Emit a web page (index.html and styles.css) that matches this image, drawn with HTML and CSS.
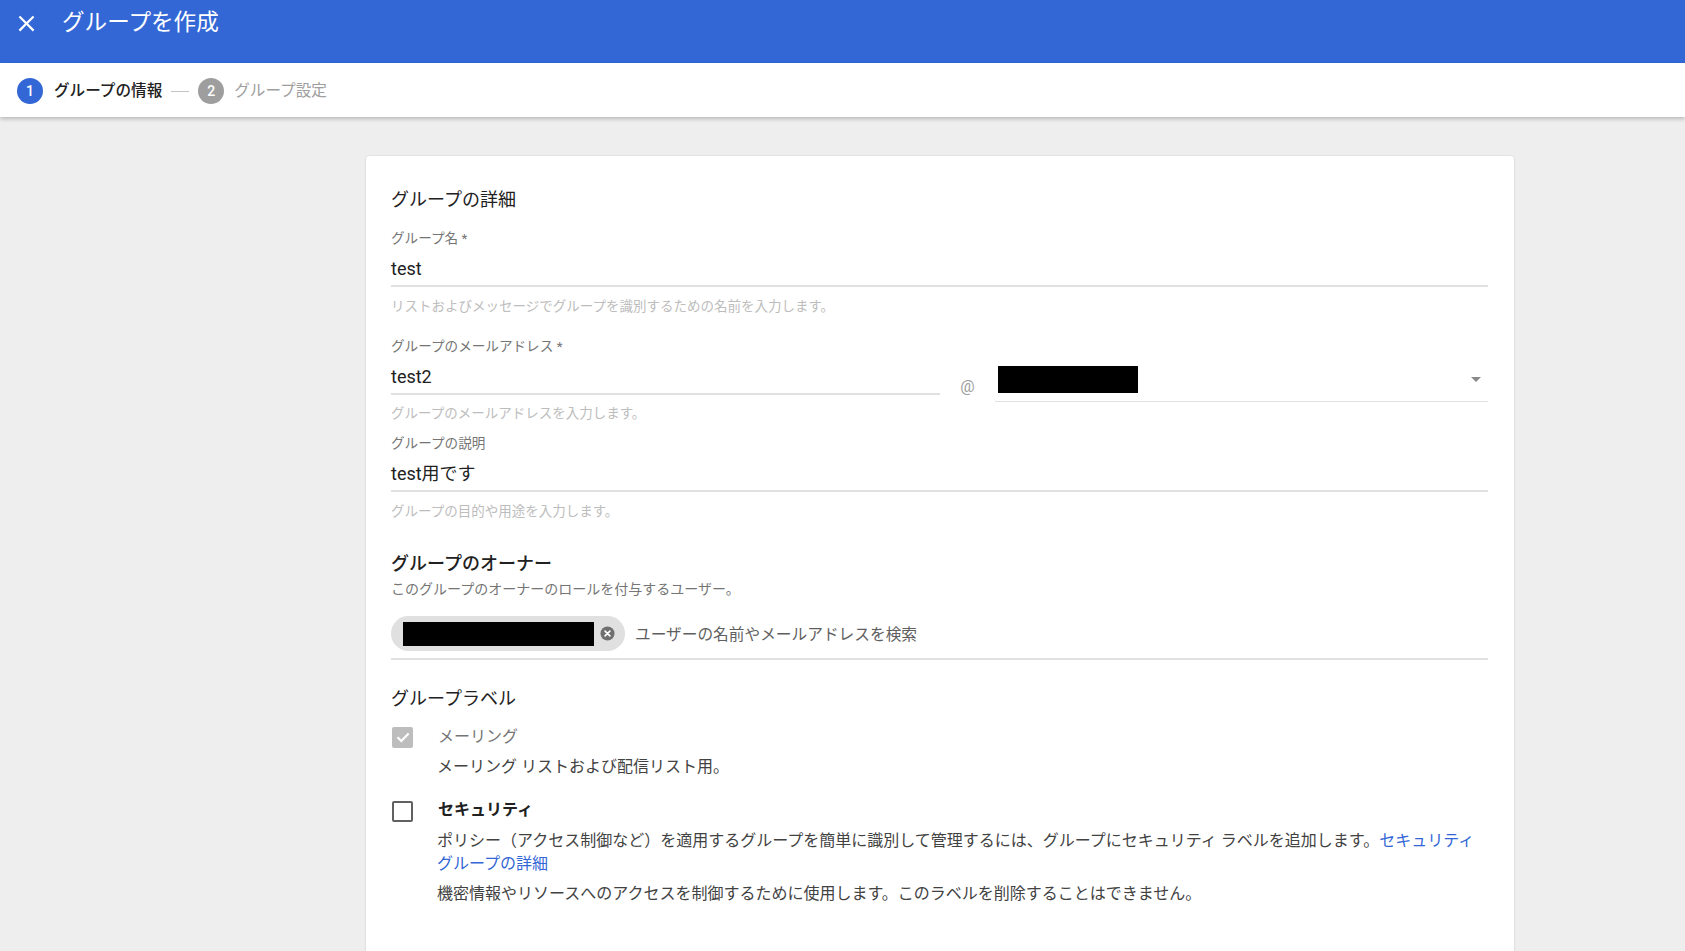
FILE: index.html
```html
<!DOCTYPE html>
<html lang="ja">
<head>
<meta charset="utf-8">
<title>グループを作成</title>
<link rel="stylesheet" href="styles.css">
</head>
<body>
<header class="appbar">
  <div class="appbar-row">
    <svg class="close-icon" viewBox="0 0 24 24" width="27" height="27" aria-hidden="true"><path d="M19 6.41L17.59 5 12 10.59 6.41 5 5 6.41 10.59 12 5 17.59 6.41 19 12 13.41 17.59 19 19 17.59 13.41 12z" fill="#ffffff"/></svg>
    <h1 class="appbar-title">グループを作成</h1>
  </div>
</header>
<nav class="stepper">
  <div class="step step-active"><span class="step-num">1</span><span class="step-label">グループの情報</span></div>
  <span class="step-line"></span>
  <div class="step step-inactive"><span class="step-num">2</span><span class="step-label">グループ設定</span></div>
</nav>
<main class="page">
  <section class="card">
    <h2 class="section-title">グループの詳細</h2>

    <div class="field field-first">
      <div class="field-label">グループ名 *</div>
      <div class="field-input">test</div>
      <div class="field-help">リストおよびメッセージでグループを識別するための名前を入力します。</div>
    </div>

    <div class="field field-email">
      <div class="field-label">グループのメールアドレス *</div>
      <div class="email-row">
        <div class="field-input email-input">test2</div>
        <div class="at-sign">@</div>
        <div class="domain-select">
          <span class="redacted domain-redacted"></span>
          <span class="select-arrow"></span>
        </div>
      </div>
      <div class="field-help help-tight">グループのメールアドレスを入力します。</div>
    </div>

    <div class="field field-desc">
      <div class="field-label">グループの説明</div>
      <div class="field-input">test用です</div>
      <div class="field-help">グループの目的や用途を入力します。</div>
    </div>

    <h2 class="section-title section-owner">グループのオーナー</h2>
    <p class="section-sub">このグループのオーナーのロールを付与するユーザー。</p>
    <div class="owner-row">
      <div class="chip">
        <span class="redacted chip-redacted"></span>
        <svg class="chip-remove" viewBox="0 0 16 16" width="15" height="15" aria-hidden="true"><circle cx="8" cy="8" r="7.5" fill="#6f6f6f"/><path d="M5.4 5.4L10.6 10.6M10.6 5.4L5.4 10.6" stroke="#ffffff" stroke-width="1.7" stroke-linecap="round"/></svg>
      </div>
      <span class="owner-placeholder">ユーザーの名前やメールアドレスを検索</span>
    </div>

    <h2 class="section-title section-labels">グループラベル</h2>

    <div class="option option-first">
      <div class="option-box"><span class="checkbox checkbox-checked"><svg viewBox="0 0 20 20" width="20" height="20" aria-hidden="true"><path d="M4.5 10.2L8.3 14L15.6 6.6" fill="none" stroke="#ffffff" stroke-width="2.2"/></svg></span></div>
      <div class="option-body">
        <div class="option-title option-disabled">メーリング</div>
        <p class="option-text text-first">メーリング リストおよび配信リスト用。</p>
      </div>
    </div>

    <div class="option option-second">
      <div class="option-box"><span class="checkbox"></span></div>
      <div class="option-body">
        <div class="option-title option-bold">セキュリティ</div>
        <p class="option-text text-para">ポリシー（アクセス制御など）を適用するグループを簡単に識別して管理するには、グループにセキュリティ ラベルを追加します。<a class="link" href="#"><span class="keep">セキュリティ</span> <span class="keep">グループの詳細</span></a></p>
        <p class="option-text text-last">機密情報やリソースへのアクセスを制御するために使用します。このラベルを削除することはできません。</p>
      </div>
    </div>
  </section>
</main>
</body>
</html>
```

FILE: styles.css
```css
* { box-sizing: border-box; }

html, body {
  margin: 0;
  padding: 0;
}

body {
  font-family: Roboto, "Noto Sans CJK JP", sans-serif;
  background: #eeeeee;
  color: #212121;
  min-height: 100vh;
}

/* App bar */
.appbar {
  height: 63px;
  background: #3367d6;
  color: #ffffff;
}

.appbar-row {
  height: 46px;
  display: flex;
  align-items: center;
  padding-left: 13px;
}

.close-icon {
  flex: none;
  display: block;
}

.appbar-title {
  margin: 0 0 0 22px;
  font-size: 22.6px;
  font-weight: 400;
  line-height: 28px;
  white-space: nowrap;
}

/* Stepper */
.stepper {
  position: relative;
  z-index: 1;
  height: 54px;
  background: #ffffff;
  box-shadow: 0 2px 4px rgba(0, 0, 0, 0.22);
  display: flex;
  align-items: center;
  padding: 2px 0 0 17px;
}

.step {
  display: flex;
  align-items: center;
}

.step-num {
  width: 26px;
  height: 26px;
  border-radius: 50%;
  display: flex;
  align-items: center;
  justify-content: center;
  color: #ffffff;
  font-size: 14px;
  font-weight: 500;
  flex: none;
}

.step-label {
  margin-left: 11px;
  font-size: 15.6px;
  line-height: 22px;
  white-space: nowrap;
}

.step-active .step-num { background: #3367d6; }
.step-active .step-label { color: #212121; font-weight: 500; }

.step-inactive .step-num { background: #9e9e9e; }
.step-inactive .step-label { color: #9e9e9e; margin-left: 10px; }

.step-line {
  width: 18px;
  height: 1px;
  background: #c4c4c4;
  margin: 0 9px;
}

/* Page + card */
.page {
  padding: 38px 0 0 365px;
}

.card {
  width: 1150px;
  background: #ffffff;
  border: 1px solid #e2e2e2;
  border-radius: 4px 4px 0 0;
  box-shadow: 0 1px 2px rgba(0, 0, 0, 0.06);
  padding: 32px 26px 60px 25px;
}

.section-title {
  margin: 0;
  font-size: 18px;
  line-height: 24px;
  font-weight: 400;
  color: #212121;
}

.section-owner {
  margin-top: 33px;
  font-weight: 500;
}

.section-labels {
  margin-top: 27px;
}

.section-sub {
  margin: 5px 0 0;
  font-size: 14px;
  line-height: 16px;
  color: #757575;
}

/* Fields */
.field-first { margin-top: 18px; }
.field-email { margin-top: 24px; }
.field-desc { margin-top: 14px; }

.field-label {
  font-size: 13.6px;
  line-height: 16px;
  color: #757575;
}

.field-input {
  padding: 11px 0 4px;
  font-size: 18px;
  line-height: 24px;
  color: #212121;
  border-bottom: 2px solid #e0e0e0;
}

.field-help {
  margin-top: 11px;
  font-size: 13.5px;
  line-height: 16px;
  color: #bdbdbd;
}

.help-tight { margin-top: 3px; }

.email-row {
  display: flex;
  align-items: flex-start;
}

.email-input {
  width: 549px;
  flex: none;
}

.at-sign {
  width: 55px;
  flex: none;
  text-align: center;
  margin-top: 23px;
  font-size: 16px;
  line-height: 20px;
  color: #9e9e9e;
}

.domain-select {
  flex: 1;
  display: flex;
  align-items: center;
  justify-content: space-between;
  padding: 12px 7px 8px 3px;
  border-bottom: 1px solid #e0e0e0;
}

.redacted {
  display: block;
  background: #000000;
}

.domain-redacted {
  width: 140px;
  height: 27px;
}

.select-arrow {
  width: 0;
  height: 0;
  border-left: 5px solid transparent;
  border-right: 5px solid transparent;
  border-top: 5px solid #8a8a8a;
}

/* Owner chip row */
.owner-row {
  margin-top: 19px;
  padding-bottom: 7px;
  border-bottom: 2px solid #e0e0e0;
  display: flex;
  align-items: center;
}

.chip {
  height: 35px;
  border-radius: 18px;
  background: #e0e0e0;
  display: flex;
  align-items: center;
  padding: 0 10px 0 12px;
}

.chip-redacted {
  width: 191px;
  height: 24px;
}

.chip-remove {
  display: block;
  margin-left: 6px;
}

.owner-placeholder {
  margin-left: 10px;
  font-size: 15.7px;
  line-height: 22px;
  color: #5f5f5f;
  padding-top: 3px;
}

/* Label options */
.option {
  display: flex;
  align-items: flex-start;
}

.option-first { margin-top: 15px; }
.option-second { margin-top: 21px; }

.option-box {
  width: 46px;
  flex: none;
  height: 22px;
  display: flex;
  align-items: center;
  padding-left: 1px;
}

.option-second .option-box {
  padding-top: 3px;
}

.checkbox {
  width: 21px;
  height: 21px;
  border-radius: 2px;
  border: 2px solid #616161;
  display: flex;
  align-items: center;
  justify-content: center;
}

.checkbox-checked {
  border: none;
  background: #bdbdbd;
}

.checkbox svg { display: block; }

.option-body {
  flex: 1;
}

.option-title {
  font-size: 16px;
  line-height: 22px;
  padding-left: 1px;
}

.option-disabled { color: #757575; }

.option-bold {
  font-weight: 700;
  font-size: 16px;
  color: #212121;
}

.option-text {
  margin: 0;
  font-size: 16px;
  line-height: 22.5px;
  color: #424242;
}

.text-first { margin-top: 8px; line-height: 22px; }
.text-para { margin-top: 9px; }
.text-last { margin-top: 8px; }

.link {
  color: #3367d6;
  text-decoration: none;
}

.keep {
  white-space: nowrap;
}
```
